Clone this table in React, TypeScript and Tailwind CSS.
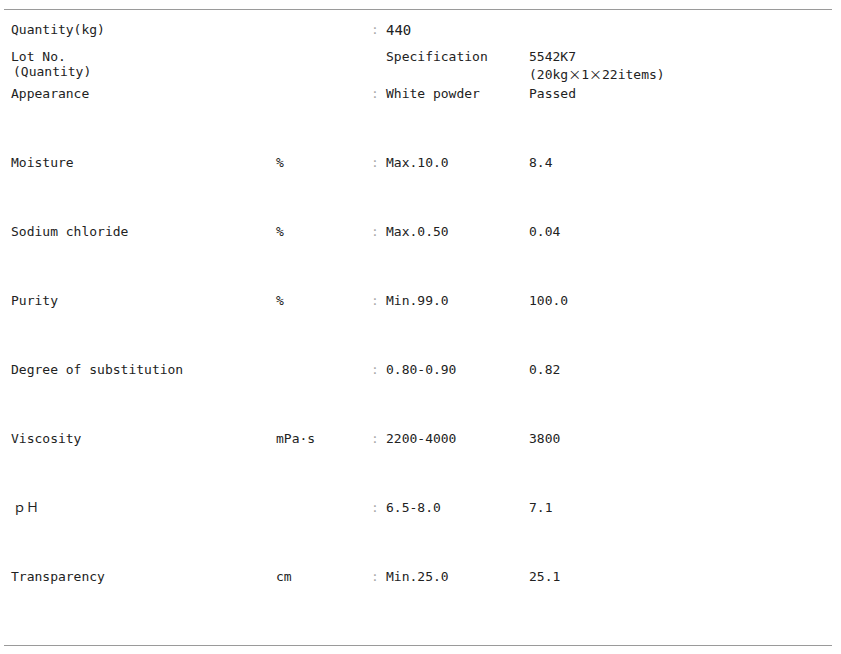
const rows = [
  { label: "Appearance", unit: "", spec: "White powder", result: "Passed" },
  { label: "Moisture", unit: "%", spec: "Max.10.0", result: "8.4" },
  { label: "Sodium chloride", unit: "%", spec: "Max.0.50", result: "0.04" },
  { label: "Purity", unit: "%", spec: "Min.99.0", result: "100.0" },
  { label: "Degree of substitution", unit: "", spec: "0.80-0.90", result: "0.82" },
  { label: "Viscosity", unit: "mPa·s", spec: "2200-4000", result: "3800" },
  { label: "ｐＨ", unit: "", spec: "6.5-8.0", result: "7.1" },
  { label: "Transparency", unit: "cm", spec: "Min.25.0", result: "25.1" },
];

const grid = "grid grid-cols-[265px_95px_15px_143px_1fr]";

const Colon = () => <span className="text-[#aaa]">:</span>;

const Times = () => <span className="font-['Noto_Sans_CJK_JP',sans-serif]">×</span>;

export default function App() {
  return (
    <div className="min-h-[654px] w-[841px] bg-white pt-[9px] text-[13px] leading-[16px] text-[#222] font-['DejaVu_Sans_Mono','Noto_Sans_CJK_JP',monospace]">
      <div className="ml-[4px] w-[828px] border-y border-[#9a9a9a] pl-[7px] pt-[12px] pb-[7px]">
        <div className={grid}>
          <div>Quantity(kg)</div>
          <div />
          <Colon />
          <div className="text-[14px]">440</div>
          <div />
        </div>

        <div className={`${grid} mt-[11px] leading-[15px]`}>
          <div>
            <div>Lot No.</div>
            <div className="pl-[2px]">(Quantity)</div>
          </div>
          <div />
          <div />
          <div>Specification</div>
          <div>
            <div>5542K7</div>
            <div className="mt-[2px]">
              (20kg<Times />1<Times />22items)
            </div>
          </div>
        </div>

        <div className="mt-[4px]">
          {rows.map((r) => (
            <div key={r.label} className={`${grid} h-[69px]`}>
              <div className={r.label === "ｐＨ" ? "pl-[2px]" : ""}>{r.label}</div>
              <div>{r.unit}</div>
              <Colon />
              <div>{r.spec}</div>
              <div>{r.result}</div>
            </div>
          ))}
        </div>
      </div>
    </div>
  );
}
